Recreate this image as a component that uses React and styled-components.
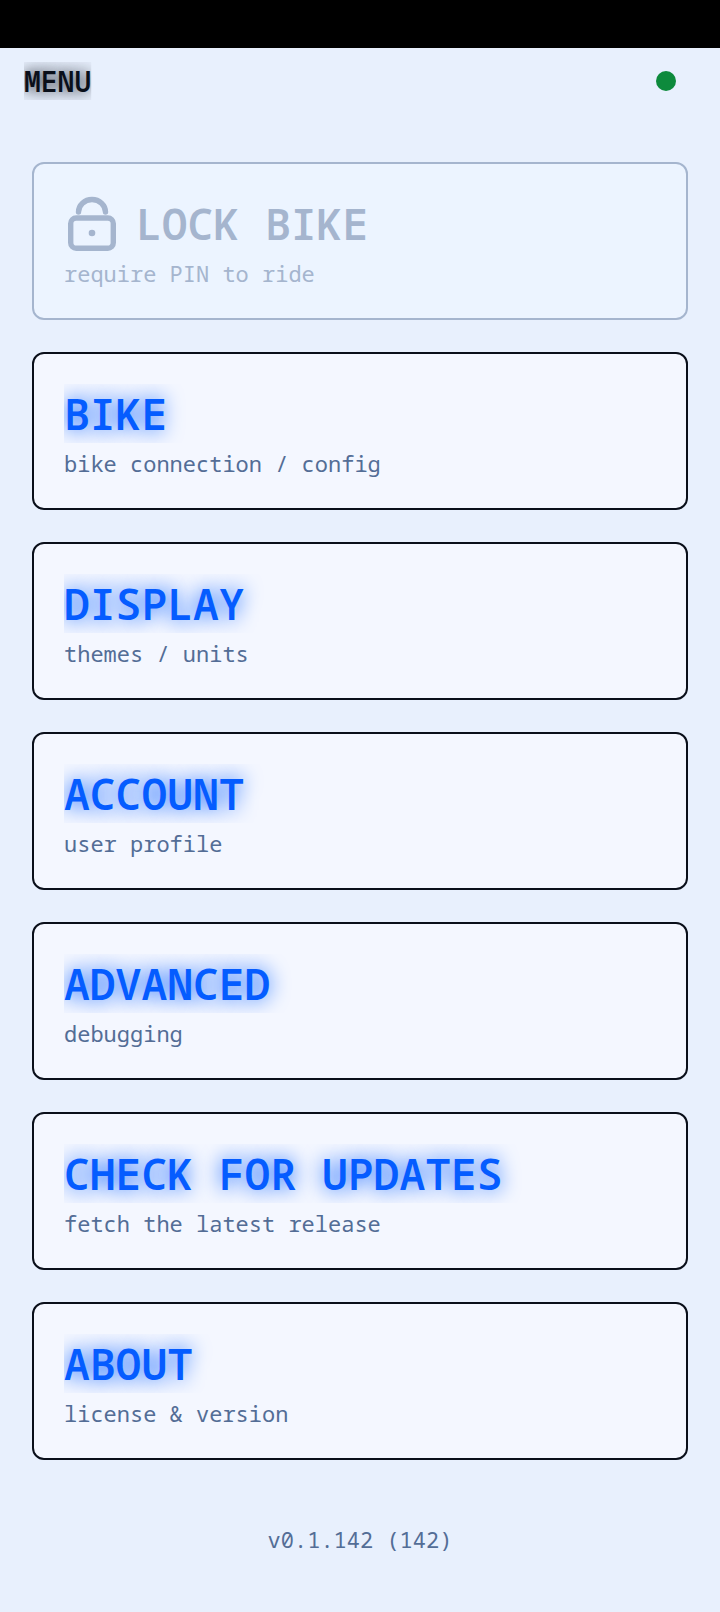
import styled, { createGlobalStyle } from "styled-components";

const GlobalStyle = createGlobalStyle`
  * {
    box-sizing: border-box;
  }
  body {
    margin: 0;
    background-color: #e8f0fd;
    color: #0a0f1a;
    font-family: "Noto Sans Mono", "DejaVu Sans Mono", monospace;
  }
`;

const MENU_ITEMS = [
  { title: "BIKE", desc: "bike connection / config" },
  { title: "DISPLAY", desc: "themes / units" },
  { title: "ACCOUNT", desc: "user profile" },
  { title: "ADVANCED", desc: "debugging" },
  { title: "CHECK FOR UPDATES", desc: "fetch the latest release" },
  { title: "ABOUT", desc: "license & version" },
];

const LockIcon = () => {
  return (
    <Icon viewBox="0 0 56 56" aria-hidden="true">
      <path d="M14.5 16a13.5 12.5 0 0 1 27 0" />
      <rect x="6.7" y="22" width="42.6" height="30.2" rx="5.5" />
      <circle cx="28" cy="37" r="3.3" />
    </Icon>
  );
};

export default function App() {
  return (
    <>
      <GlobalStyle />
      <StatusBar />
      <Header>
        <PageTitle>MENU</PageTitle>
        <StatusDot role="img" aria-label="connected" />
      </Header>
      <MenuList>
        <MenuCard type="button" disabled>
          <CardTitle>
            <LockIcon />
            LOCK BIKE
          </CardTitle>
          <CardDesc>require PIN to ride</CardDesc>
        </MenuCard>
        {MENU_ITEMS.map((item) => (
          <MenuCard type="button" key={item.title}>
            <CardTitle $glow>{item.title}</CardTitle>
            <CardDesc>{item.desc}</CardDesc>
          </MenuCard>
        ))}
      </MenuList>
      <Version>v0.1.142 (142)</Version>
    </>
  );
}

const StatusBar = styled.div`
  height: 48px;
  background-color: #000;
`;

const Header = styled.header`
  display: flex;
  align-items: center;
  justify-content: space-between;
  padding: 14px 44px 14px 24px;
`;

// the glow is cut at the text box
const PageTitle = styled.h1`
  margin: 0;
  font-size: 28px;
  line-height: 38px;
  font-weight: 600;
  text-shadow: 0 0 16px #0a0f1a;
  clip-path: inset(0);
`;

const StatusDot = styled.span`
  width: 20px;
  height: 20px;
  border-radius: 50%;
  background-color: #0d8a3c;
`;

const MenuList = styled.main`
  display: flex;
  flex-direction: column;
  gap: 32px;
  padding: 48px 32px 0;
`;

const CardTitle = styled.span`
  display: flex;
  align-items: center;
  gap: 16px;
  color: #055cff;
  font-size: 43px;
  line-height: 59px;
  font-weight: 600;
  text-shadow: ${(props) => (props.$glow ? "0 0 20px #055cff" : "none")};
  clip-path: inset(0 -24px 0 0);
`;

const CardDesc = styled.span`
  margin-top: 6px;
  color: #536d96;
  font-size: 22px;
  line-height: 29px;
`;

const MenuCard = styled.button`
  display: flex;
  flex-direction: column;
  align-items: flex-start;
  width: 100%;
  padding: 30px;
  border: 2px solid #0a0f1a;
  border-radius: 12px;
  background-color: #f4f7ff;
  font-family: inherit;
  text-align: left;
  cursor: pointer;

  &:disabled {
    border-color: #a5b5ce;
    background-color: #ecf4ff;
    cursor: default;
  }
  &:disabled ${CardTitle}, &:disabled ${CardDesc} {
    color: #a5b5ce;
  }
`;

const Icon = styled.svg`
  width: 56px;
  height: 56px;
  fill: none;
  stroke: currentColor;
  stroke-width: 5.4;
  stroke-linecap: round;

  circle {
    fill: currentColor;
    stroke: none;
  }
`;

const Version = styled.footer`
  padding: 64px 32px 56px;
  color: #536d96;
  font-size: 22px;
  line-height: 30px;
  text-align: center;
`;
